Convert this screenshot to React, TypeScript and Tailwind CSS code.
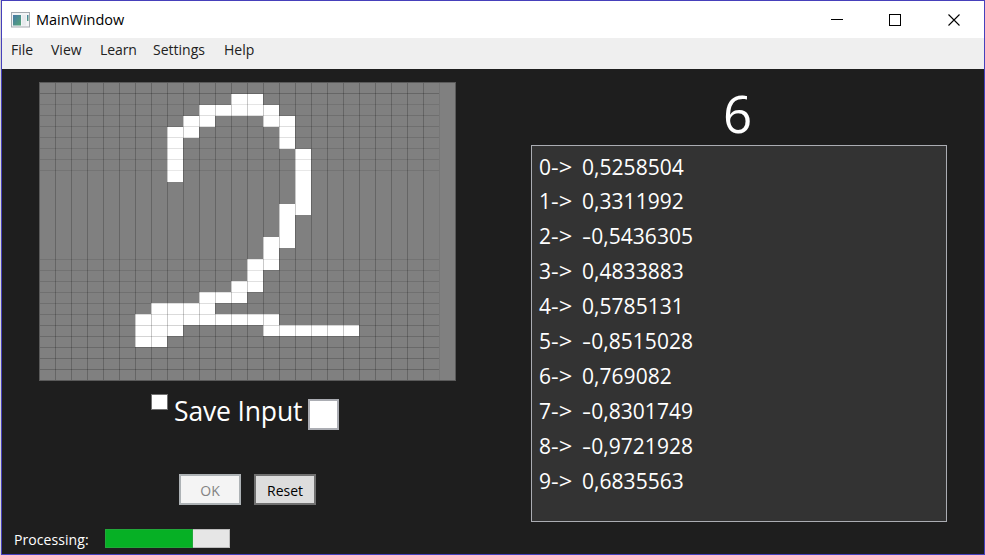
import React from "react";

const COLS = 26;
const CELL_W = 16;
const ROW_Y = Array.from({ length: 28 }, (_, i) => Math.round(i * 11.04));

// Painted cells as [row, first column, last column]
const STROKE: [number, number, number][] = [
  [1, 12, 13],
  [2, 10, 14],
  [3, 9, 10], [3, 14, 15],
  [4, 8, 9], [4, 15, 15],
  [5, 8, 8], [5, 15, 15],
  [6, 8, 8], [6, 16, 16],
  [7, 8, 8], [7, 16, 16],
  [8, 8, 8], [8, 16, 16],
  [9, 16, 16],
  [10, 16, 16],
  [11, 15, 16],
  [12, 15, 15],
  [13, 15, 15],
  [14, 14, 15],
  [15, 14, 14],
  [16, 13, 14],
  [17, 13, 13],
  [18, 12, 13],
  [19, 10, 12],
  [20, 7, 10],
  [21, 6, 14],
  [22, 6, 8], [22, 14, 19],
  [23, 6, 7],
];

const ROW_ALPHA: Record<number, number> = {
  1: 0.2, 2: 0.1, 3: 0.13, 4: 0.13, 5: 0.12, 6: 0.11, 7: 0.11, 8: 0.09,
  16: 0.1, 17: 0.11, 18: 0.12, 19: 0.12, 20: 0.13, 21: 0.14, 22: 0.17,
  23: 0.17, 24: 0.18, 25: 0.19, 26: 0.2,
};

const RESULTS = [
  "0,5258504", "0,3311992", "-0,5436305", "0,4833883", "0,5785131",
  "-0,8515028", "0,769082", "-0,8301749", "-0,9721928", "0,6835563",
];

// Upper rows start just below their grid line; lower rows start on it.
const cellTop = (row: number) => ROW_Y[row] + (row < 14 ? 1 : 0);

function DrawingGrid() {
  return (
    <svg width="417" height="299" shapeRendering="crispEdges" className="block">
      <rect width="417" height="299" fill="#808080" />
      {STROKE.map(([r, a, b]) => (
        <rect
          key={`${r}-${a}`}
          x={a * CELL_W}
          y={cellTop(r)}
          width={(b - a + 1) * CELL_W}
          height={ROW_Y[r + 1] + (r < 14 ? 1 : 0) - cellTop(r)}
          fill="#fff"
        />
      ))}
      {Object.entries(ROW_ALPHA).map(([r, alpha]) => (
        <rect key={r} x="0" y={ROW_Y[Number(r)]} width="400" height="1" fill="#000" fillOpacity={alpha} />
      ))}
      {Array.from({ length: COLS - 1 }, (_, i) => (
        <rect key={i} x={(i + 1) * CELL_W} y="0" width="1" height="299" fill="#000" fillOpacity={i === 24 ? 0.08 : 0.21} />
      ))}
      <rect x="0.5" y="0.5" width="416" height="298" fill="none" stroke="#5a5a5a" />
    </svg>
  );
}

function AppIcon() {
  return (
    <svg width="19" height="16" viewBox="0 0 19 16">
      <defs>
        <linearGradient id="pane" x1="0" y1="0" x2="1" y2="1">
          <stop offset="0" stopColor="#4779a8" />
          <stop offset="1" stopColor="#55a676" />
        </linearGradient>
      </defs>
      <rect x="0.5" y="0.5" width="18" height="14.5" fill="#f3f4f6" stroke="#a5aab0" />
      <rect x="2" y="3" width="8" height="10.5" fill="url(#pane)" />
      <rect x="11" y="3" width="4" height="10.5" fill="#e7eaed" />
      <rect x="16" y="3" width="1.5" height="6" fill="url(#pane)" />
    </svg>
  );
}

export default function App() {
  return (
    <div className="h-[555px] w-[985px] overflow-hidden bg-[#d4d4d4] pl-px font-['Open_Sans','Noto_Sans',sans-serif]">
      <div className="flex h-full flex-col border border-[#4640bb] bg-[#1e1e1e]">
        <header className="flex h-[37px] shrink-0 items-center bg-white pl-[9px] text-black">
          <AppIcon />
          <span className="ml-[6px] text-[14.5px] leading-5 tracking-[-0.03px]">MainWindow</span>
          <svg className="ml-auto mr-[23px]" width="130" height="14" fill="none" stroke="#000">
            <path d="M0 6.5h12" shapeRendering="crispEdges" />
            <rect x="58.5" y="1.5" width="11" height="11" shapeRendering="crispEdges" />
            <path d="M117.5 1.5l11 11M128.5 1.5l-11 11" strokeWidth="1.1" />
          </svg>
        </header>
        <nav className="flex h-[31px] shrink-0 items-start gap-[17px] bg-[#efefef] pl-[9px] pt-[2px] text-[14px] leading-5 text-[#212121]">
          <span className="w-[23px]">File</span>
          <span className="w-8">View</span>
          <span className="w-[36px] tracking-[-0.1px]">Learn</span>
          <span className="w-[54px]">Settings</span>
          <span>Help</span>
        </nav>
        <main className="flex min-h-0 flex-1 text-white">
          <section className="w-[490px]">
            <div className="pl-[37px] pt-[13px]">
              <DrawingGrid />
            </div>
            <div className="ml-[149px] mt-[13px] flex h-[40px] items-start">
              <span className="h-[16px] w-[17px] border border-[#707070] bg-white" />
              <span className="-mt-px ml-[6px] w-[134px] whitespace-nowrap text-[26.5px] leading-[36px] tracking-[-0.15px]">Save Input</span>
              <span className="mt-[5px] h-[31px] w-[31px] border-2 border-[#abadb3] bg-white" />
            </div>
            <div className="ml-[177px] mt-[40px] flex gap-[13px] text-[14px] leading-5">
              <button className="h-[31px] w-[62px] border-2 border-[#adb2b5] bg-[#f4f4f4] pt-[2px] text-[#838383]">OK</button>
              <button className="h-[31px] w-[62px] border-2 border-[#707070] bg-[#dddddd] pt-[2px] text-black">Reset</button>
            </div>
            <div className="ml-[12px] mt-[24px] flex items-start text-[14px] leading-5">
              <span className="w-[91px] pt-px tracking-[0.07px]">Processing:</span>
              <div className="flex h-[19px] w-[125px] border border-[#bcbcbc] bg-[#e6e6e6]">
                <div className="-my-px -ml-px w-[88px] border border-[#22a83a] bg-[#06b025]" />
              </div>
            </div>
          </section>
          <section className="ml-[39px] w-[416px]">
            <div className="h-[76px] pl-[192px] pt-[9px] text-[51px] leading-[70px]">6</div>
            <ul className="h-[377px] border border-[#abadb3] bg-[#333333] pl-[7px] pt-[4px] text-[21px] leading-[35px]">
              {RESULTS.map((value, i) => (
                <li key={i} className="flex h-[35px] first:h-[34px]">
                  <span className="w-[43px] whitespace-nowrap">
                    {i}
                    <span className="inline-block origin-left scale-x-[1.13]">-&gt;</span>
                  </span>
                  {value.startsWith("-") && <span className="w-[9.2px] origin-left scale-x-[1.35]">-</span>}
                  <span className="tracking-[0.04px]">{value.replace("-", "")}</span>
                </li>
              ))}
            </ul>
          </section>
        </main>
      </div>
    </div>
  );
}
